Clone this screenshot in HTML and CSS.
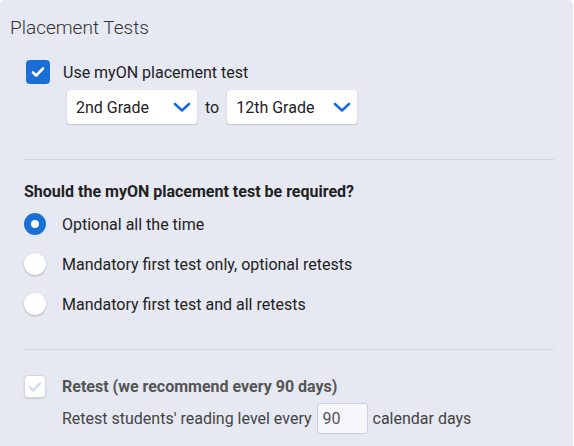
FILE: index.html
```html
<!DOCTYPE html>
<html lang="en">
<head>
  <meta charset="UTF-8" />
  <title>Placement Tests</title>
  <link rel="stylesheet" href="styles.css">
</head>
<body>

  <div class="panel">
    <h1 class="titre">Placement Tests</h1>

    <div class="section-haut">
      <label class="ligne-check">
        <span class="case case-on">
          <svg width="16" height="16" viewBox="0 0 16 16"><path d="M3 8.5l3.2 3L13 4.5" fill="none" stroke="#fff" stroke-width="2.6" stroke-linecap="round" stroke-linejoin="round"/></svg>
        </span>
        <span class="texte">Use myON placement test</span>
      </label>
      <div class="grades">
        <div class="select">
          <span>2nd Grade</span>
          <svg width="18" height="12" viewBox="0 0 18 12"><path d="M2 3l7 6.5L16 3" fill="none" stroke="#1a6fd6" stroke-width="2.6" stroke-linecap="round" stroke-linejoin="round"/></svg>
        </div>
        <span class="to">to</span>
        <div class="select">
          <span>12th Grade</span>
          <svg width="18" height="12" viewBox="0 0 18 12"><path d="M2 3l7 6.5L16 3" fill="none" stroke="#1a6fd6" stroke-width="2.6" stroke-linecap="round" stroke-linejoin="round"/></svg>
        </div>
      </div>
    </div>

    <hr class="separateur separateur-haut">

    <div class="section-question">
      <h2 class="question">Should the myON placement test be required?</h2>
      <label class="ligne-radio">
        <span class="rond rond-on"></span>
        <span class="texte">Optional all the time</span>
      </label>
      <label class="ligne-radio">
        <span class="rond"></span>
        <span class="texte">Mandatory first test only, optional retests</span>
      </label>
      <label class="ligne-radio">
        <span class="rond"></span>
        <span class="texte">Mandatory first test and all retests</span>
      </label>
    </div>

    <hr class="separateur separateur-bas">

    <div class="section-retest">
      <label class="ligne-retest">
        <span class="case case-off">
          <svg width="16" height="16" viewBox="0 0 16 16"><path d="M3 8.5l3.2 3L13 4.5" fill="none" stroke="#cfe0f4" stroke-width="2.6" stroke-linecap="round" stroke-linejoin="round"/></svg>
        </span>
        <span class="texte-gras">Retest (we recommend every 90 days)</span>
      </label>
      <div class="ligne-jours">
        <span>Retest students' reading level every</span>
        <span class="champ">90</span>
        <span>calendar days</span>
      </div>
    </div>
  </div>

</body>
</html>
```

FILE: styles.css
```css
body {
  margin: 0;
  padding: 0;
  background: #fff;
  font-family: Roboto, "Liberation Sans", sans-serif;
  color: #333;
}
.panel {
  width: 573px;
  height: 446px;
  background: #e6e9f1;
  border-radius: 5px 5px 0 0;
  box-sizing: border-box;
  padding-top: 17px;
  overflow: hidden;
}
.titre {
  margin: 0 0 0 10px;
  font-size: 19px;
  font-weight: 300;
  color: #333;
  line-height: 22px;
}
.section-haut {
  padding: 21px 0 0 26px;
}
.ligne-check {
  display: flex;
  align-items: center;
  gap: 13px;
}
.case {
  width: 24px;
  height: 24px;
  border-radius: 4px;
  box-sizing: border-box;
  display: flex;
  align-items: center;
  justify-content: center;
}
.case-on {
  background: #1a6fd6;
}
.case-off {
  width: 22px;
  height: 23px;
  background: #fff;
  border: 1px solid #d4d8e4;
  box-shadow: 0 1px 2px rgba(0,0,0,0.12);
}
.texte {
  font-size: 16px;
  color: #222;
}
.grades {
  display: flex;
  align-items: center;
  gap: 8px;
  margin: 6px 0 0 41px;
}
.select {
  width: 130px;
  height: 34px;
  box-sizing: border-box;
  background: #fff;
  border-radius: 4px;
  box-shadow: 0 1px 2px rgba(0,0,0,0.18);
  display: flex;
  align-items: center;
  justify-content: space-between;
  padding: 0 6px 0 9px;
  font-size: 16px;
  color: #222;
}
.to {
  font-size: 16px;
  color: #222;
}
.separateur {
  border: none;
  border-top: 1px solid #d3d6e2;
  margin: 0 19px 0 24px;
}
.separateur-haut {
  margin-top: 35px;
}
.separateur-bas {
  margin-top: 25px;
}
.section-question {
  padding: 0 0 0 24px;
}
.question {
  font-size: 16px;
  line-height: 19px;
  font-weight: bold;
  color: #222;
  margin: 22px 0 3px 0;
}
.ligne-radio {
  display: flex;
  align-items: center;
  gap: 16px;
  height: 40px;
}
.rond {
  width: 22px;
  height: 22px;
  border-radius: 50%;
  background: #fff;
  box-shadow: 0 1px 2px rgba(0,0,0,0.25);
  box-sizing: border-box;
}
.rond-on {
  background: #fff;
  border: 7px solid #1a6fd6;
  box-shadow: none;
}
.section-retest {
  padding: 25px 0 0 24px;
}
.ligne-retest {
  display: flex;
  align-items: center;
  gap: 16px;
}
.texte-gras {
  font-size: 16px;
  font-weight: bold;
  color: #555;
}
.ligne-jours {
  display: flex;
  align-items: center;
  gap: 5px;
  margin: 5px 0 0 38px;
  font-size: 16px;
  color: #444;
}
.champ {
  width: 51px;
  height: 31px;
  box-sizing: border-box;
  border: 1px solid #c9cee0;
  border-radius: 3px;
  background: #f5f6f9;
  padding: 0 0 0 5px;
  display: flex;
  align-items: center;
  color: #555;
}
```
